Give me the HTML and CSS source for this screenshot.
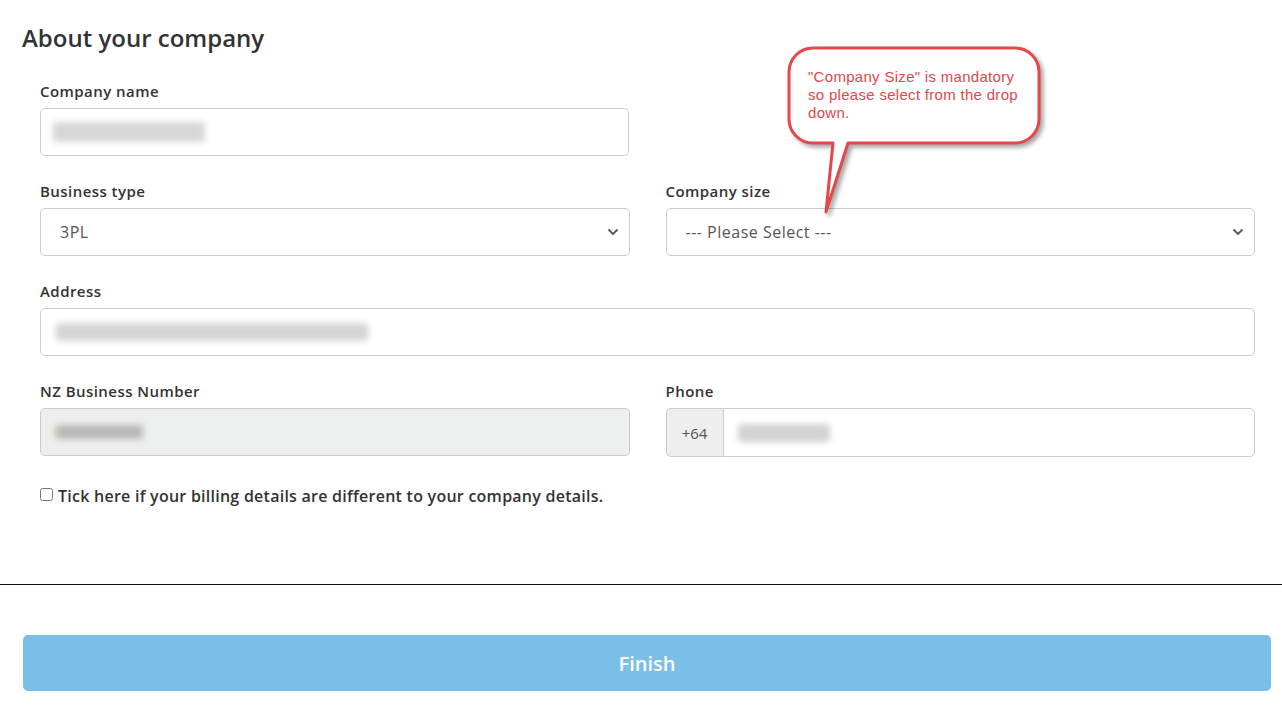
FILE: index.html
```html
<!DOCTYPE html>
<html lang="en">
<head>
<meta charset="utf-8">
<title>About your company</title>
<link rel="stylesheet" href="styles.css">
</head>
<body>
<main class="page">
  <h1 class="title">About your company</h1>
  <form class="form">
    <div class="row">
      <div class="field half">
        <label class="label">Company name</label>
        <div class="control"><span class="blur blur-name"></span></div>
      </div>
    </div>
    <div class="row two">
      <div class="field">
        <label class="label">Business type</label>
        <div class="control select">
          <span class="value">3PL</span>
          <svg class="chev" width="12" height="8" viewBox="0 0 12 8"><path d="M1.5 1.5 L6 6 L10.5 1.5" fill="none" stroke="#555" stroke-width="1.8"/></svg>
        </div>
      </div>
      <div class="field">
        <label class="label">Company size</label>
        <div class="control select">
          <span class="value">--- Please Select ---</span>
          <svg class="chev" width="12" height="8" viewBox="0 0 12 8"><path d="M1.5 1.5 L6 6 L10.5 1.5" fill="none" stroke="#555" stroke-width="1.8"/></svg>
        </div>
      </div>
    </div>
    <div class="row">
      <div class="field">
        <label class="label">Address</label>
        <div class="control"><span class="blur blur-address"></span></div>
      </div>
    </div>
    <div class="row two">
      <div class="field">
        <label class="label">NZ Business Number</label>
        <div class="control disabled"><span class="blur blur-nzbn"></span></div>
      </div>
      <div class="field">
        <label class="label">Phone</label>
        <div class="group">
          <span class="prefix">+64</span>
          <div class="control grow"><span class="blur blur-phone"></span></div>
        </div>
      </div>
    </div>
    <label class="check"><input type="checkbox" class="box"> Tick here if your billing details are different to your company details.</label>
  </form>
  <hr class="rule">
  <div class="actions"><button type="button" class="finish">Finish</button></div>
</main>

<div class="callout">
  <svg class="callout-shape" width="290" height="190" viewBox="0 0 290 190">
    <path d="M33 8 H235 A24 24 0 0 1 259 32 V79 A24 24 0 0 1 235 103 H68 L46 172 L53 103 H33 A24 24 0 0 1 9 79 V32 A24 24 0 0 1 33 8 Z" fill="#fff" stroke="#e54848" stroke-width="3" stroke-linejoin="round"/>
  </svg>
  <p class="callout-text">"Company Size" is mandatory so please select from the drop down.</p>
</div>
</body>
</html>
```
FILE: styles.css
```css
* { box-sizing: border-box; }
html, body { margin: 0; padding: 0; background: #fff; }
body {
  font-family: "Open Sans", "DejaVu Sans", sans-serif;
  color: #333;
  width: 1282px;
  height: 705px;
  overflow: hidden;
  position: relative;
}
.page { padding-top: 22px; }
.title {
  margin: 0 0 27px 22px;
  font-size: 24px;
  line-height: 32px;
  font-weight: 600;
  color: #333;
}
.form { padding: 0 27px 0 40px; }
.row { display: flex; gap: 36px; margin-bottom: 25px; }
.row .field { flex: 1; }
.row .field.half { flex: 0 0 589px; }
.label {
  display: block;
  font-size: 15px;
  line-height: 20px;
  font-weight: 600;
  letter-spacing: 0.45px;
  color: #333;
  margin-bottom: 7px;
}
.control {
  height: 48px;
  border: 1px solid #ccc;
  border-radius: 5px;
  background: #fff;
  display: flex;
  align-items: center;
  padding: 0 12px;
}
.control.select { padding: 0 10px 0 19px; justify-content: space-between; }
.value { font-size: 16px; letter-spacing: 0.5px; color: #555; }
.control.disabled { background: #eeefef; padding-left: 14px; }
.group { display: flex; height: 49px; }
.prefix {
  width: 57px;
  border: 1px solid #ccc;
  border-right: none;
  border-radius: 5px 0 0 5px;
  background: #eee;
  display: flex;
  align-items: center;
  justify-content: center;
  font-size: 15px;
  color: #555;
}
.control.grow { flex: 1; height: 49px; border-radius: 0 5px 5px 0; }
.blur { display: inline-block; filter: blur(3px); border-radius: 3px; }
.blur-name { width: 152px; height: 20px; background: #d6d6d6; margin-left: 0; }
.blur-address { width: 312px; height: 18px; background: #d4d4d4; margin-left: 3px; }
.blur-nzbn { width: 88px; height: 14px; background: #b8b8b8; border-left: 2px solid #e3b77a; }
.blur-phone { width: 92px; height: 18px; background: #d2d2d2; margin-left: 2px; }
.check {
  display: flex;
  align-items: center;
  gap: 5px;
  font-size: 16px;
  line-height: 20px;
  font-weight: 600;
  letter-spacing: 0.25px;
  color: #333;
  padding-top: 4px;
}
.box { margin: 0; width: 13px; height: 13px; position: relative; top: -2px; }
.rule {
  margin: 78px 0 0 0;
  border: none;
  border-top: 1px solid #111;
  height: 0;
}
.actions { padding: 50px 11px 0 23px; }
.finish {
  width: 100%;
  height: 56px;
  border: none;
  border-radius: 5px;
  background: #79bfe7;
  color: #fff;
  font-family: "Open Sans", "DejaVu Sans", sans-serif;
  font-size: 20px;
  font-weight: 600;
}
.callout { position: absolute; left: 780px; top: 40px; width: 290px; height: 190px; }
.callout-shape { display: block; filter: drop-shadow(3px 3px 2px rgba(0,0,0,0.35)); }
.callout-text {
  position: absolute;
  left: 28px;
  top: 28px;
  width: 225px;
  margin: 0;
  font-family: "Liberation Sans", Arial, sans-serif;
  font-size: 15px;
  line-height: 18px;
  letter-spacing: 0.3px;
  color: #e3474a;
}
```
